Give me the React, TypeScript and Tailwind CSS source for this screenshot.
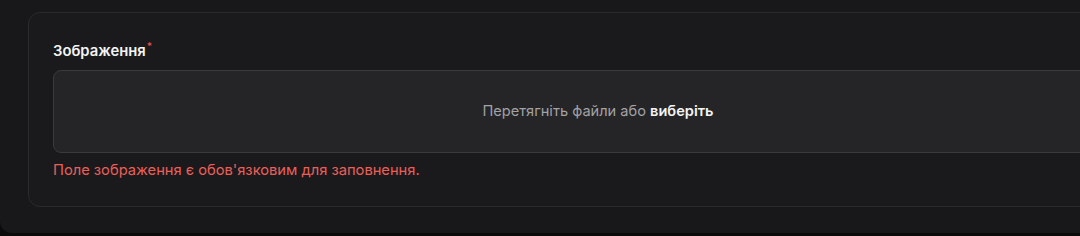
export default function App() {
  return (
    <div className="h-[236px] w-[1080px] overflow-hidden bg-[#0b0b0c] font-['Inter',sans-serif]">
      <div className="w-[1200px] rounded-b-[12px] bg-[#18181a] pl-[28px] pt-[12px] pb-[26px]">
        <div className="w-[1140px] rounded-[12px] border border-[#2a2a2d] bg-[#1a1a1c] px-[24px] pt-[28px] pb-[26px]">
          <label className="flex text-[14.8px] leading-[20px] font-semibold text-[#f4f4f5]">
            Зображення
            <span className="ml-[1px] -mt-[5px] text-[10px] text-[#e5484d]">*</span>
          </label>
          <div className="mt-[9px] flex h-[83px] items-center justify-center rounded-[8px] border border-[#3a3a3d] bg-[#252527] text-[14.6px] text-[#a1a1a6]">
            Перетягніть файли або&nbsp;<span className="font-semibold text-[#f4f4f5]">виберіть</span>
          </div>
          <p className="mt-[7px] text-[14.7px] leading-[20px] text-[#ec5f59]">
            Поле зображення є обов'язковим для заповнення.
          </p>
        </div>
      </div>
    </div>
  );
}
